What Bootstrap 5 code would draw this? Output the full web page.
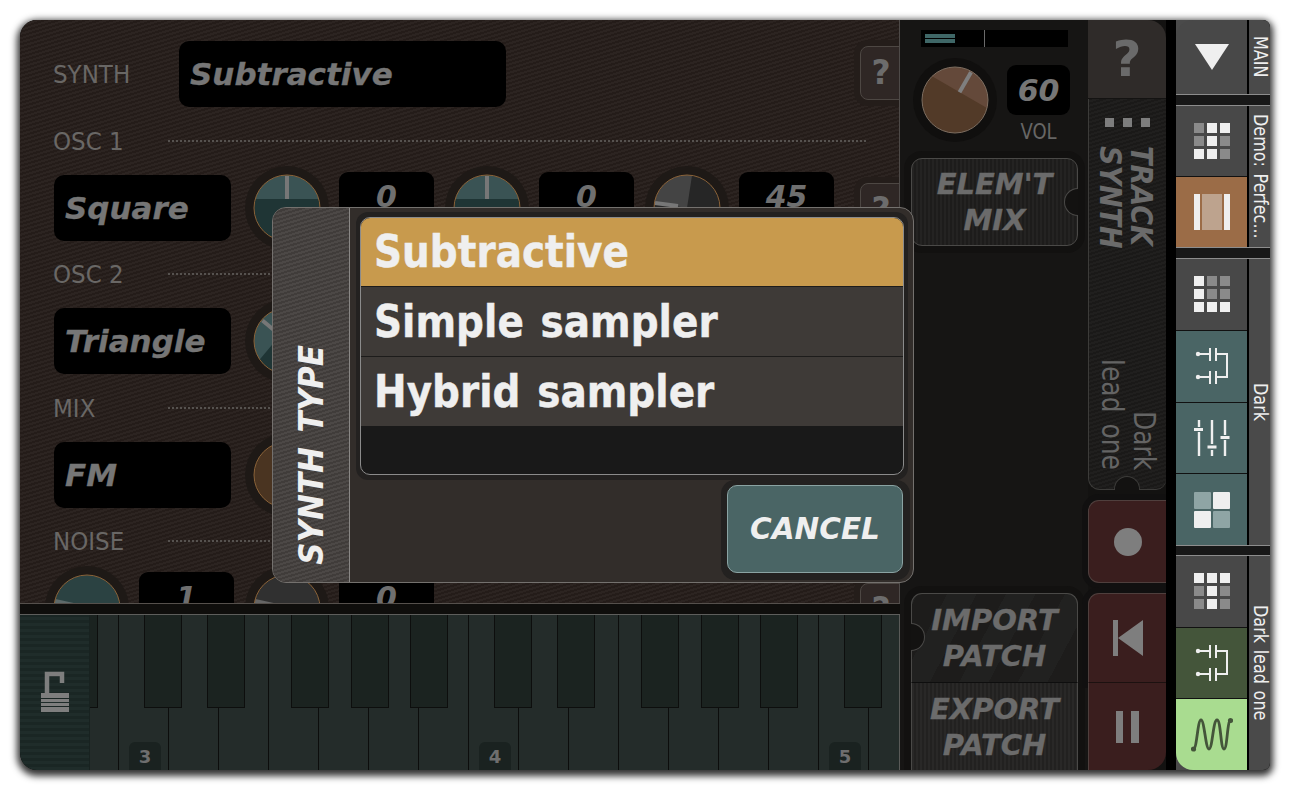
<!DOCTYPE html>
<html lang="en">
<head>
  <meta charset="UTF-8">
  <title>Synth patch editor</title>
  <link href="https://cdn.jsdelivr.net/npm/bootstrap@5.3.0/dist/css/bootstrap.min.css" rel="stylesheet">
  <style>
    html,body{margin:0;background:#fff;overflow:hidden;}
    body{font-family:"DejaVu Sans",sans-serif;}
    .app-shell{width:1250px;height:750px;margin:20px;background:#000;border-radius:17px 7px 7px 17px;overflow:hidden;box-shadow:0 3px 7px 3px rgba(0,0,0,.8);}

    /* left: patch page + keyboard */
    .left-side{width:880px;}
    .patch-panel{height:584px;padding-left:33px;border-right:1px solid #4e4a48;border-bottom:1px solid #55504c;background:repeating-linear-gradient(-17deg,#2c2421 0 2px,#241c19 2px 4px);}
    .patch-row{height:66px;}
    .patch-row.first{margin-top:21px;}
    .head-row{height:67.5px;}
    .sec-label{width:115px;font-size:23px;color:#696765;white-space:nowrap;}
    .sec-label span{display:inline-block;transform:scaleY(1.08);}
    .sec-label.wide{width:126px;}
    .dots{width:698px;border-top:2px dotted #56524f;}
    .field-box{background:#000;border-radius:10px;color:#767676;font-size:31px;padding:1px 0 0 11px;height:66px;-webkit-text-stroke:.35px #767676;}
    .field-box.osc{width:177px;margin-left:1px;}
    .field-box.synth{width:327px;}
    .knob-svg{width:84px;height:84px;margin:-9px 0;flex:none;display:block;}
    .knob-gap{margin-left:14px;}
    .val-box{width:95px;height:50px;margin:-3px 11px 0 10px;background:#000;border-radius:9px;color:#6f6f6f;font-size:30px;flex:none;}
    .help-btn{width:60px;height:54px;margin:8px -21px 0 auto;background:#2f2725;border:1px solid #4d4743;border-radius:8px;box-shadow:0 0 0 6px #241d1a;color:#6c6c6c;font-size:33px;padding-right:18px;flex:none;}
    .help-btn.top{margin-top:5px;}
    .noise-first{margin-left:-8px;}

    .key-top{height:11px;background:#0f0e0c;border-bottom:1px solid #5e5e5c;}
    .key-area{height:155px;}
    .lock-strip{width:70px;background:repeating-linear-gradient(0deg,#1f2c2a 0 3px,#1a2624 3px 6px);border-right:1px solid #182220;}
    .key-bed{width:810px;background:#242c2a;border-right:1px solid #5a5a58;}
    .white-key{width:50px;flex:none;border-right:1px solid #0c0d0c;padding-left:10px;}
    .white-row{margin-left:-21px;height:100%;}
    .black-key{position:absolute;top:0;width:38px;height:93px;background:#1b2320;border:1px solid #0d0e0d;border-top:0;}
    .oct-tag{width:32px;height:28px;background:#1a2220;border-radius:6px 6px 0 0;color:#6e6e6e;font-size:18px;font-weight:700;}

    /* middle column */
    .mid-side{width:188px;background:#161514;}
    .level-meter{width:147px;height:17px;margin:10px 0 0 21px;background:#000;padding:4px;}
    .level-bar{width:30px;height:4px;background:#3f6767;margin-bottom:1px;}
    .level-mark{position:absolute;left:63px;top:0;width:1px;height:17px;background:#6a6a6a;}
    .vol-row{margin:11px 0 0 13px;}
    .vol-row .knob-svg{margin:0;}
    .vol-stack{margin-top:7px;}
    .vol-num{width:63px;height:50px;margin-left:10px;background:#000;border-radius:9px;color:#767676;font-size:30px;}
    .vol-label{width:63px;margin-left:10px;text-align:center;font-size:18px;color:#676665;line-height:34px;}
    .vol-label span{display:inline-block;transform:scaleY(1.15);}
    .tool-btn{color:#6b6b6b;font-size:29px;line-height:36px;border:1px solid #4a4947;-webkit-text-stroke:.35px #6b6b6b;}
    .tool-btn.elem{width:167px;height:88px;margin:9px 0 0 11px;border-radius:11px;box-shadow:0 0 0 7px #121110;background:repeating-linear-gradient(90deg,#242322 0 2px,#1d1c1b 2px 4px);}
    .tool-pair{width:167px;margin:auto 0 0 11px;border-radius:11px 11px 0 0;box-shadow:0 0 0 7px #121110;}
    .tool-btn.imp{height:89px;border-radius:11px 11px 0 0;border-bottom:0;background:repeating-linear-gradient(-62deg,#1d1c1b 0 26px,#212120 26px 52px);}
    .tool-btn.exp{height:88px;border-top:1px solid #0e0e0e;border-bottom:0;background:repeating-linear-gradient(90deg,#292827 0 2px,#222120 2px 4px);}
    .notch-r,.notch-l{position:absolute;width:14px;height:28px;background:#131211;border:1px solid #4a4947;}
    .notch-r{right:-1px;top:29px;border-right:0;border-radius:14px 0 0 14px;}
    .notch-l{left:-1px;top:29px;border-left:0;border-radius:0 14px 14px 0;}

    /* track column */
    .track-side{width:78px;background:#131211;}
    .track-help{height:79px;background:#2f2b29;border-top-right-radius:18px;border-bottom:1px solid #141312;color:#6a6a6a;font-size:50px;}
    .track-panel{height:391px;border:1px solid #3c3b39;border-width:0 0 1px 1px;border-radius:0 0 10px 12px;background:repeating-linear-gradient(-17deg,#201f1e 0 2px,#1a1918 2px 4px);color:#6b6b6b;}
    .dot-row{margin-top:19px;gap:9px;}
    .dot-row span{width:9px;height:9px;background:#7d7d7d;}
    .vert-text{writing-mode:vertical-rl;white-space:nowrap;}
    .vert-title{margin:19px 3px 0 0;font-size:27px;line-height:29px;transform:scaleX(1.1);}
    .vert-name{margin-top:auto;margin-bottom:19px;font-size:25px;line-height:27px;text-align:right;height:120px;word-spacing:.12em;color:#646464;transform:scaleX(1.18);}
    .notch-b{position:absolute;left:25px;bottom:-1px;width:26px;height:14px;background:#131211;border:1px solid #3c3b39;border-bottom:0;border-radius:13px 13px 0 0;}
    .trans-btn{background:#3a1e1e;border:1px solid #4f3f3d;border-right:0;border-bottom:0;}
    .trans-btn.rec{height:83px;margin-top:10px;border-bottom:1px solid #4f3f3d;border-radius:11px 0 0 11px;box-shadow:0 0 0 6px #111010;}
    .trans-btn.prev{height:89px;margin-top:10px;border-top-left-radius:11px;box-shadow:0 0 0 6px #111010;}
    .trans-btn.pause{height:88px;border-top:1px solid #1c1110;border-left:1px solid #4f3f3d;border-bottom-right-radius:18px;}
    .rec-dot{width:28px;height:28px;border-radius:50%;background:#7e7e7e;}

    .gutter{width:10px;background:#000;}

    /* right nav */
    .nav-side{width:94px;}
    .nav-group{background:#4a4a4a;border-top:1px solid #8d8d8d;border-bottom:1px solid #8d8d8d;}
    .nav-group.g1{height:75px;border-top:0;}
    .nav-group.g2{height:143px;}
    .nav-group.g3{height:288px;}
    .nav-group.g4{height:215px;border-bottom:0;}
    .nav-bar{height:10px;background:#181818;}
    .nav-bar.short{height:9px;}
    .nav-tiles{width:71px;}
    .nav-tile{flex:1 1 0;border-bottom:1px solid #111;background:#484848;}
    .nav-tile:last-child{border-bottom:0;}
    .nav-tile.main-tile{border-top-left-radius:17px;}
    .tile-orange{background:#9b6c47;}
    .tile-teal{background:#4a6565;}
    .tile-green{background:#44553a;}
    .tile-lime{background:#a9dc90;border-bottom-left-radius:17px;}
    .nav-label{width:23px;border-left:2px solid #000;color:#eee;font-size:16px;writing-mode:vertical-rl;white-space:nowrap;word-spacing:.1em;}
    .nav-label span{transform:scaleX(1.25);}
    .dot-grid{display:grid;grid-template-columns:repeat(3,10px);gap:3px;}
    .dot-grid span{width:10px;height:10px;background:#8a8a8a;}
    .dot-grid span.on{background:#efefef;}
    .four-grid{display:grid;grid-template-columns:repeat(2,17px);gap:2px;}
    .four-grid span{height:17px;border-radius:1px;background:#8fa5a5;}
    .four-grid span.on{background:#efefef;}

    /* dialog */
    .type-dialog{position:absolute;left:252px;top:187px;width:642px;height:376px;background:#322d2a;border:1px solid #74716e;border-radius:14px;overflow:hidden;}
    .dialog-tab{width:77px;border-right:1px solid #8a8886;background:repeating-linear-gradient(-17deg,#4c4846 0 2px,#403c3a 2px 4px);color:#efefef;font-size:31px;padding-bottom:17px;writing-mode:vertical-rl;word-spacing:.12em;}
    .dialog-tab span{transform:rotate(180deg) scaleX(1.1);white-space:nowrap;}
    .dialog-body{width:563px;}
    .menu-wrap{width:552px;margin:4px 0 0 6px;padding:5px 4px;background:#232120;border-radius:12px;}
    .type-list{height:258px;background:#191919;border:1px solid #8b8b8b;border-radius:10px;overflow:hidden;}
    .type-item{display:flex;align-items:center;height:70px;padding:1px 0 0 13px;background:#3e3a37;border:0;border-bottom:1px solid #1d1c1b;border-radius:0 !important;color:#efefef;font-size:39px;font-weight:700;word-spacing:.08em;-webkit-text-stroke:.4px #efefef;}
    .type-item span{display:inline-block;transform:scaleY(1.12);}
    .type-item.picked{height:69px;background:#c89a4d;}
    .type-item.end{height:69px;border-bottom:0;}
    .cancel-wrap{margin:0 3px 0 auto;padding:5px 7px 7px 6px;background:#232120;border-radius:14px;}
    .cancel-btn{width:176px;height:88px;background:#4a6565;border:1px solid #8aa3a3;border-radius:10px;color:#efefef;font-size:29.5px;padding:0;}
    .cancel-btn:hover{background:#4a6565;color:#efefef;border-color:#8aa3a3;}
  </style>
</head>
<body>

<div class="app-shell d-flex position-relative">

  <div class="left-side d-flex flex-column flex-none">
    <div class="patch-panel overflow-hidden">
      <div class="patch-row first d-flex align-items-center">
        <div class="sec-label wide"><span>SYNTH</span></div>
        <div class="field-box synth d-flex align-items-center fw-bold fst-italic">Subtractive</div>
        <div class="help-btn top align-self-start d-flex align-items-center justify-content-center fw-bold">?</div>
      </div>

      <div class="head-row d-flex align-items-center"><div class="sec-label"><span>OSC 1</span></div><div class="dots"></div></div>
      <div class="patch-row d-flex align-items-start">
        <div class="field-box osc d-flex align-items-center fw-bold fst-italic">Square</div>
        <svg class="knob-svg knob-gap" viewBox="0 0 84 84"><circle cx="42" cy="42" r="42" fill="#1e1916"/><circle cx="42" cy="42" r="33" fill="#1f3535"/><path d="M10.3 33A33 33 0 0 1 73.7 33Z" fill="#3a5354"/><circle cx="42" cy="42" r="33" fill="none" stroke="#8a6238"/><path d="M42 10V33" stroke="#777" stroke-width="4"/></svg>
        <div class="val-box d-flex align-items-center justify-content-center fw-bold fst-italic">0</div>
        <svg class="knob-svg" viewBox="0 0 84 84"><circle cx="42" cy="42" r="42" fill="#1e1916"/><circle cx="42" cy="42" r="33" fill="#1f3535"/><path d="M10.3 33A33 33 0 0 1 73.7 33Z" fill="#3a5354"/><circle cx="42" cy="42" r="33" fill="none" stroke="#8a6238"/><path d="M42 10V33" stroke="#777" stroke-width="4"/></svg>
        <div class="val-box d-flex align-items-center justify-content-center fw-bold fst-italic">0</div>
        <svg class="knob-svg" viewBox="0 0 84 84"><circle cx="42" cy="42" r="42" fill="#1e1916"/><circle cx="42" cy="42" r="33" fill="#262626"/><path d="M42 42L9.4 37A33 33 0 0 1 47 9.4Z" fill="#444"/><circle cx="42" cy="42" r="33" fill="none" stroke="#8a6238"/><path d="M10 37L33 40" stroke="#777" stroke-width="4"/></svg>
        <div class="val-box d-flex align-items-center justify-content-center fw-bold fst-italic">45</div>
        <div class="help-btn d-flex align-items-center justify-content-center fw-bold">?</div>
      </div>

      <div class="head-row d-flex align-items-center"><div class="sec-label"><span>OSC 2</span></div><div class="dots"></div></div>
      <div class="patch-row d-flex align-items-start">
        <div class="field-box osc d-flex align-items-center fw-bold fst-italic">Triangle</div>
        <svg class="knob-svg knob-gap" viewBox="0 0 84 84"><circle cx="42" cy="42" r="42" fill="#1e1916"/><circle cx="42" cy="42" r="33" fill="#1f3535"/><g transform="rotate(-50 42 42)"><path d="M10.3 33A33 33 0 0 1 73.7 33Z" fill="#3a5354"/><path d="M42 10V33" stroke="#777" stroke-width="4"/></g><circle cx="42" cy="42" r="33" fill="none" stroke="#8a6238"/></svg>
      </div>

      <div class="head-row d-flex align-items-center"><div class="sec-label"><span>MIX</span></div><div class="dots"></div></div>
      <div class="patch-row d-flex align-items-start">
        <div class="field-box osc d-flex align-items-center fw-bold fst-italic">FM</div>
        <svg class="knob-svg knob-gap" viewBox="0 0 84 84"><circle cx="42" cy="42" r="42" fill="#1e1916"/><circle cx="42" cy="42" r="33" fill="#4a3421"/><circle cx="42" cy="42" r="33" fill="none" stroke="#8a6238"/></svg>
      </div>

      <div class="head-row d-flex align-items-center"><div class="sec-label"><span>NOISE</span></div><div class="dots"></div></div>
      <div class="patch-row d-flex align-items-start">
        <svg class="knob-svg noise-first" viewBox="0 0 84 84"><circle cx="42" cy="42" r="42" fill="#1e1916"/><circle cx="42" cy="42" r="33" fill="#2b4242"/><path d="M10 35L33 40" stroke="#5e6a6a" stroke-width="4"/><circle cx="42" cy="42" r="33" fill="none" stroke="#8a6238"/></svg>
        <div class="val-box d-flex align-items-center justify-content-center fw-bold fst-italic">1</div>
        <svg class="knob-svg" viewBox="0 0 84 84"><circle cx="42" cy="42" r="42" fill="#1e1916"/><circle cx="42" cy="42" r="33" fill="#303030"/><path d="M10 35L33 40" stroke="#666" stroke-width="4"/><circle cx="42" cy="42" r="33" fill="none" stroke="#8a6238"/></svg>
        <div class="val-box d-flex align-items-center justify-content-center fw-bold fst-italic">0</div>
        <div class="help-btn d-flex align-items-center justify-content-center fw-bold">?</div>
      </div>
    </div>

    <div class="key-top"></div>
    <div class="key-area d-flex">
      <div class="lock-strip d-flex align-items-center justify-content-center">
        <svg width="30" height="44" viewBox="0 0 30 44"><path d="M7 22V3H22V12" fill="none" stroke="#7e7e7e" stroke-width="4.5"/><path d="M1 22H29V27H1ZM1 28H29V31H1ZM1 32H29V35H1ZM1 36H29V41H1Z" fill="#7e7e7e"/></svg>
      </div>
      <div class="key-bed position-relative overflow-hidden" id="keys">
        <div class="white-row d-flex" id="whites"></div>
      </div>
    </div>
  </div>

  <div class="mid-side d-flex flex-column flex-none">
    <div class="level-meter position-relative">
      <div class="level-bar"></div>
      <div class="level-bar"></div>
      <div class="level-mark"></div>
    </div>
    <div class="vol-row d-flex">
      <svg class="knob-svg" viewBox="0 0 84 84"><circle cx="42" cy="42" r="42" fill="#100f0e"/><circle cx="42" cy="42" r="33" fill="#523a28"/><g transform="rotate(30 42 42)"><path d="M10.3 33A33 33 0 0 1 73.7 33Z" fill="#64493a"/><path d="M42 10V33" stroke="#7f7f7f" stroke-width="4"/></g><circle cx="42" cy="42" r="33" fill="none" stroke="#7c6d60"/></svg>
      <div class="vol-stack">
        <div class="vol-num d-flex align-items-center justify-content-center fw-bold fst-italic">60</div>
        <div class="vol-label"><span>VOL</span></div>
      </div>
    </div>
    <div class="tool-btn elem position-relative d-flex align-items-center justify-content-center text-center fw-bold fst-italic">ELEM'T<br>MIX<span class="notch-r"></span></div>
    <div class="tool-pair">
      <div class="tool-btn imp position-relative d-flex align-items-center justify-content-center text-center fw-bold fst-italic">IMPORT<br>PATCH<span class="notch-l"></span></div>
      <div class="tool-btn exp d-flex align-items-center justify-content-center text-center fw-bold fst-italic">EXPORT<br>PATCH</div>
    </div>
  </div>

  <div class="track-side d-flex flex-column flex-none">
    <div class="track-help d-flex align-items-center justify-content-center fw-bold">?</div>
    <div class="track-panel position-relative d-flex flex-column align-items-center">
      <div class="dot-row d-flex"><span></span><span></span><span></span></div>
      <div class="vert-text vert-title fw-bold fst-italic">TRACK<br>SYNTH</div>
      <div class="vert-text vert-name">Dark<br>lead one</div>
      <span class="notch-b"></span>
    </div>
    <div class="trans-btn rec d-flex align-items-center justify-content-center"><div class="rec-dot"></div></div>
    <div class="trans-btn prev d-flex align-items-center justify-content-center">
      <svg width="30" height="36" viewBox="0 0 30 36"><path d="M0 0H5V36H0ZM30 0V36L5 18Z" fill="#7e7e7e"/></svg>
    </div>
    <div class="trans-btn pause d-flex align-items-center justify-content-center">
      <svg width="24" height="32" viewBox="0 0 24 32"><path d="M0 0H7V32H0ZM15 0H23V32H15Z" fill="#7e7e7e"/></svg>
    </div>
  </div>

  <div class="gutter flex-none"></div>

  <div class="nav-side d-flex flex-column flex-none">
    <div class="nav-group g1 d-flex">
      <div class="nav-tiles d-flex flex-column">
        <div class="nav-tile main-tile d-flex align-items-center justify-content-center">
          <svg width="34" height="26" viewBox="0 0 34 26"><path d="M0 0H34L17 26Z" fill="#efefef"/></svg>
        </div>
      </div>
      <div class="nav-label d-flex align-items-center justify-content-center"><span>MAIN</span></div>
    </div>
    <div class="nav-bar"></div>

    <div class="nav-group g2 d-flex">
      <div class="nav-tiles d-flex flex-column">
        <div class="nav-tile d-flex align-items-center justify-content-center">
          <div class="dot-grid"><span></span><span class="on"></span><span class="on"></span><span></span><span class="on"></span><span></span><span class="on"></span><span class="on"></span><span></span></div>
        </div>
        <div class="nav-tile tile-orange d-flex align-items-center justify-content-center">
          <svg width="36" height="36" viewBox="0 0 36 36"><rect width="6" height="36" fill="#efefef"/><rect x="30" width="6" height="36" fill="#efefef"/><rect x="8" width="20" height="36" fill="#bda38e"/></svg>
        </div>
      </div>
      <div class="nav-label d-flex align-items-center justify-content-center"><span>Demo: Perfec...</span></div>
    </div>
    <div class="nav-bar"></div>

    <div class="nav-group g3 d-flex">
      <div class="nav-tiles d-flex flex-column">
        <div class="nav-tile d-flex align-items-center justify-content-center">
          <div class="dot-grid"><span class="on"></span><span></span><span></span><span class="on"></span><span></span><span></span><span class="on"></span><span class="on"></span><span class="on"></span></div>
        </div>
        <div class="nav-tile tile-teal d-flex align-items-center justify-content-center">
          <svg width="36" height="36" viewBox="0 0 36 36" fill="none" stroke="#efefef" stroke-width="2"><circle cx="4" cy="6" r="2.2" fill="#efefef" stroke="none"/><circle cx="4" cy="29" r="2.2" fill="#efefef" stroke="none"/><path d="M4 6H16M4 29H16M16 0V13M22 0V13M16 23V36M22 23V36M22 6H33V29H22"/></svg>
        </div>
        <div class="nav-tile tile-teal d-flex align-items-center justify-content-center">
          <svg width="36" height="36" viewBox="0 0 36 36" fill="none" stroke="#efefef" stroke-width="2.4"><path d="M5 0V7M5 12V36M18 0V24M18 30V36M31 0V15M31 20V36"/><path d="M0 9.5H9M13.5 27H22.5M26.5 17.5H35.5" stroke-width="3"/></svg>
        </div>
        <div class="nav-tile tile-teal d-flex align-items-center justify-content-center">
          <div class="four-grid"><span></span><span class="on"></span><span class="on"></span><span></span></div>
        </div>
      </div>
      <div class="nav-label d-flex align-items-center justify-content-center"><span>Dark</span></div>
    </div>
    <div class="nav-bar short"></div>

    <div class="nav-group g4 d-flex">
      <div class="nav-tiles d-flex flex-column">
        <div class="nav-tile d-flex align-items-center justify-content-center">
          <div class="dot-grid"><span class="on"></span><span class="on"></span><span class="on"></span><span></span><span class="on"></span><span></span><span></span><span class="on"></span><span></span></div>
        </div>
        <div class="nav-tile tile-green d-flex align-items-center justify-content-center">
          <svg width="36" height="36" viewBox="0 0 36 36" fill="none" stroke="#efefef" stroke-width="2"><circle cx="4" cy="6" r="2.2" fill="#efefef" stroke="none"/><circle cx="4" cy="29" r="2.2" fill="#efefef" stroke="none"/><path d="M4 6H16M4 29H16M16 0V13M22 0V13M16 23V36M22 23V36M22 6H33V29H22"/></svg>
        </div>
        <div class="nav-tile tile-lime d-flex align-items-center justify-content-center">
          <svg width="42" height="36" viewBox="0 0 42 36" fill="none" stroke="#44553a" stroke-width="2.8"><circle cx="2.500" cy="32" r="2.600" fill="#44553a" stroke="none"/><circle cx="39.500" cy="3.500" r="2.600" fill="#44553a" stroke="none"/><path d="M2.500 32C6 32 6.500 3 10 3S14.500 32 18 32 22 3 26 3 29.500 32 33 32 36 4 39.500 3.500"/></svg>
        </div>
      </div>
      <div class="nav-label d-flex align-items-center justify-content-center"><span>Dark lead one</span></div>
    </div>
  </div>

  <div class="type-dialog d-flex">
    <div class="dialog-tab d-flex align-items-center justify-content-end fw-bold fst-italic"><span>SYNTH TYPE</span></div>
    <div class="dialog-body d-flex flex-column">
      <div class="menu-wrap">
        <div class="list-group type-list">
          <button type="button" class="list-group-item type-item picked"><span>Subtractive</span></button>
          <button type="button" class="list-group-item type-item"><span>Simple sampler</span></button>
          <button type="button" class="list-group-item type-item end"><span>Hybrid sampler</span></button>
        </div>
      </div>
      <div class="cancel-wrap">
        <button type="button" class="btn cancel-btn fw-bold fst-italic">CANCEL</button>
      </div>
    </div>
  </div>

</div>

<script src="https://cdn.jsdelivr.net/npm/bootstrap@5.3.0/dist/js/bootstrap.bundle.min.js"></script>
<script>
// keyboard: white keys every 50px, black keys repeat every 350px
const whites = document.getElementById('whites');
const keys = document.getElementById('keys');
const octaves = {1:'3', 8:'4', 15:'5'};

for (let i = 0; i < 18; i++) {
  const k = document.createElement('div');
  k.className = 'white-key d-flex align-items-end';
  if (octaves[i]) k.innerHTML = '<div class="oct-tag d-flex align-items-center justify-content-center">' + octaves[i] + '</div>';
  whites.appendChild(k);
}

[60,144,207,291,351,410,494,557,641,701,760,844].forEach(x => {
  const b = document.createElement('div');
  b.className = 'black-key';
  b.style.left = (x - 90) + 'px';
  keys.appendChild(b);
});
</script>
</body>
</html>
